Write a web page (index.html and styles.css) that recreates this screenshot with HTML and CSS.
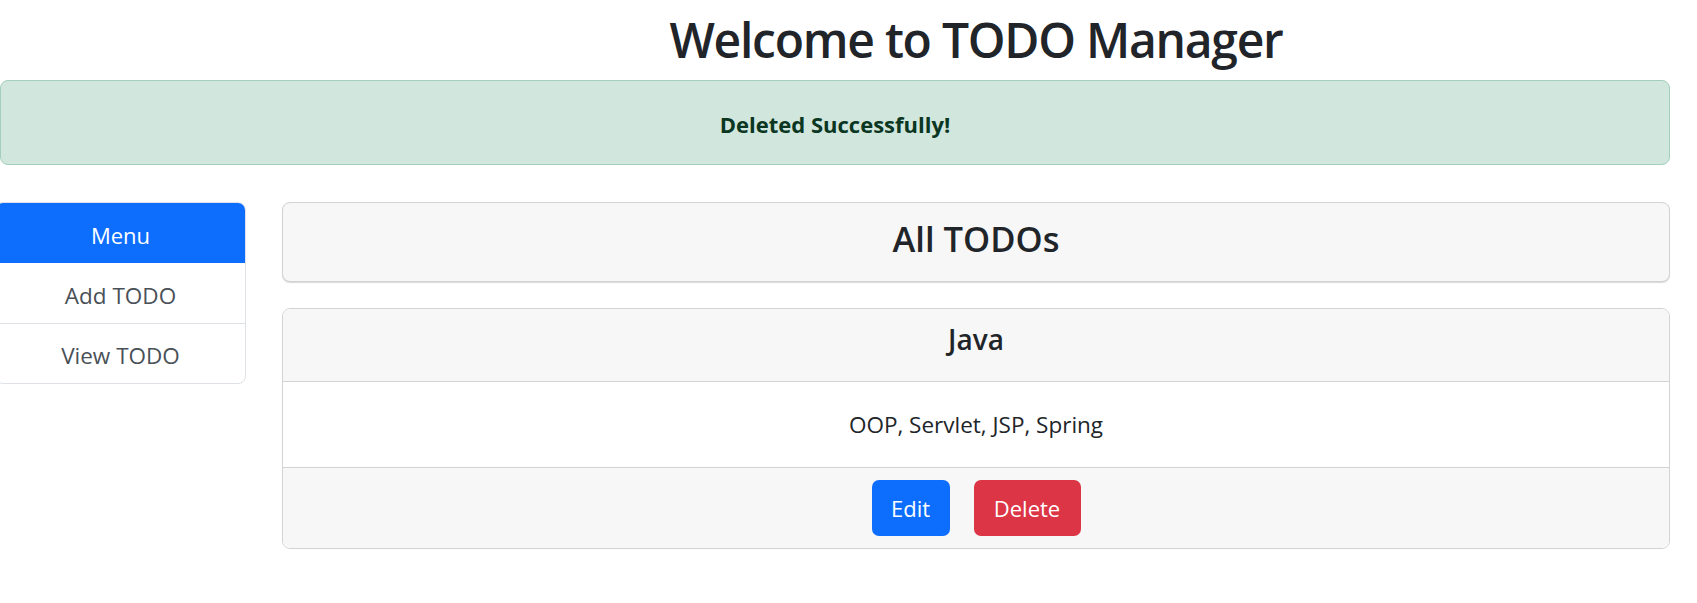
FILE: index.html
```html
<!DOCTYPE html>
<html lang="en">
<head>
<meta charset="utf-8">
<title>TODO Manager</title>
<link rel="stylesheet" href="styles.css">
</head>
<body>
<div class="page">
  <header class="top-row">
    <div class="spacer"></div>
    <h1 class="title">Welcome to TODO Manager</h1>
  </header>
  <div class="alert">Deleted Successfully!</div>
  <div class="main-row">
    <nav class="menu">
      <div class="menu-head">Menu</div>
      <a class="menu-item" href="#">Add TODO</a>
      <a class="menu-item" href="#">View TODO</a>
    </nav>
    <section class="content">
      <div class="card heading-card">
        <h2 class="heading">All TODOs</h2>
      </div>
      <div class="card todo-card">
        <div class="todo-head"><h3 class="todo-title">Java</h3></div>
        <div class="todo-body">OOP, Servlet, JSP, Spring</div>
        <div class="todo-foot">
          <button class="btn btn-edit">Edit</button>
          <button class="btn btn-delete">Delete</button>
        </div>
      </div>
    </section>
  </div>
</div>
</body>
</html>
```
FILE: styles.css
```css
* { box-sizing: border-box; }
html, body { margin: 0; padding: 0; background: #fff; }
body {
  font-family: "Open Sans", "Noto Sans", sans-serif;
  font-size: 20px;
  line-height: 1.5;
  color: #212529;
}
.page {
  width: 1670px;
}
.top-row {
  display: grid;
  grid-template-columns: 246px 1388px;
  column-gap: 36px;
  height: 80px;
}
.title {
  margin: 0;
  padding-top: 11px;
  text-align: center;
  font-size: 48px;
  font-weight: 600;
  line-height: 1.2;
  letter-spacing: -1.25px;
  color: #212529;
}
.alert {
  height: 85px;
  padding-top: 3px;
  display: flex;
  align-items: center;
  justify-content: center;
  background: #d1e7dd;
  border: 1px solid #a3cfbb;
  border-radius: 8px;
  color: #0a3622;
  font-weight: 700;
  font-size: 22px;
}
.main-row {
  margin-top: 37px;
  display: grid;
  grid-template-columns: 246px 1388px;
  column-gap: 36px;
  align-items: start;
}
.menu {
  margin-left: -5px;
  display: flex;
  flex-direction: column;
  border: 1px solid #dee2e6;
  border-radius: 8px;
  overflow: hidden;
}
.menu-head {
  height: 61px;
  margin: -1px -1px 0;
  padding-top: 5px;
  display: flex;
  align-items: center;
  justify-content: center;
  background: #0d6efd;
  color: #fff;
  font-size: 22px;
}
.menu-item {
  height: 60px;
  padding-top: 5px;
  display: flex;
  align-items: center;
  justify-content: center;
  color: #495057;
  text-decoration: none;
  font-size: 22.5px;
}
.menu-item + .menu-item { border-top: 1px solid #dee2e6; }
.content {
  display: flex;
  flex-direction: column;
  gap: 26px;
}
.card {
  border: 1px solid #d3d3d3;
  border-radius: 8px;
  background: #fff;
  overflow: hidden;
}
.heading-card {
  height: 80px;
  padding-bottom: 6px;
  background: #f7f7f7;
  display: flex;
  align-items: center;
  justify-content: center;
  box-shadow: 0 1px 1px rgba(0,0,0,0.15);
}
.heading {
  margin: 0;
  font-size: 34.5px;
  font-weight: 600;
  line-height: 1.2;
}
.todo-head {
  height: 73px;
  padding-bottom: 10px;
  background: #f7f7f7;
  border-bottom: 1px solid #d3d3d3;
  display: flex;
  align-items: center;
  justify-content: center;
}
.todo-title {
  margin: 0;
  font-size: 28px;
  font-weight: 600;
  line-height: 1.2;
}
.todo-body {
  height: 85px;
  display: flex;
  align-items: center;
  justify-content: center;
  font-size: 22.5px;
}
.todo-foot {
  height: 81px;
  background: #f7f7f7;
  border-top: 1px solid #d3d3d3;
  display: flex;
  align-items: center;
  justify-content: center;
  gap: 24px;
}
.btn {
  height: 56px;
  border: none;
  border-radius: 7px;
  color: #fff;
  font-family: inherit;
  font-size: 22px;
  padding: 0;
}
.btn-edit { background: #0d6efd; width: 78px; }
.btn-delete { background: #dc3545; width: 107px; }
```
